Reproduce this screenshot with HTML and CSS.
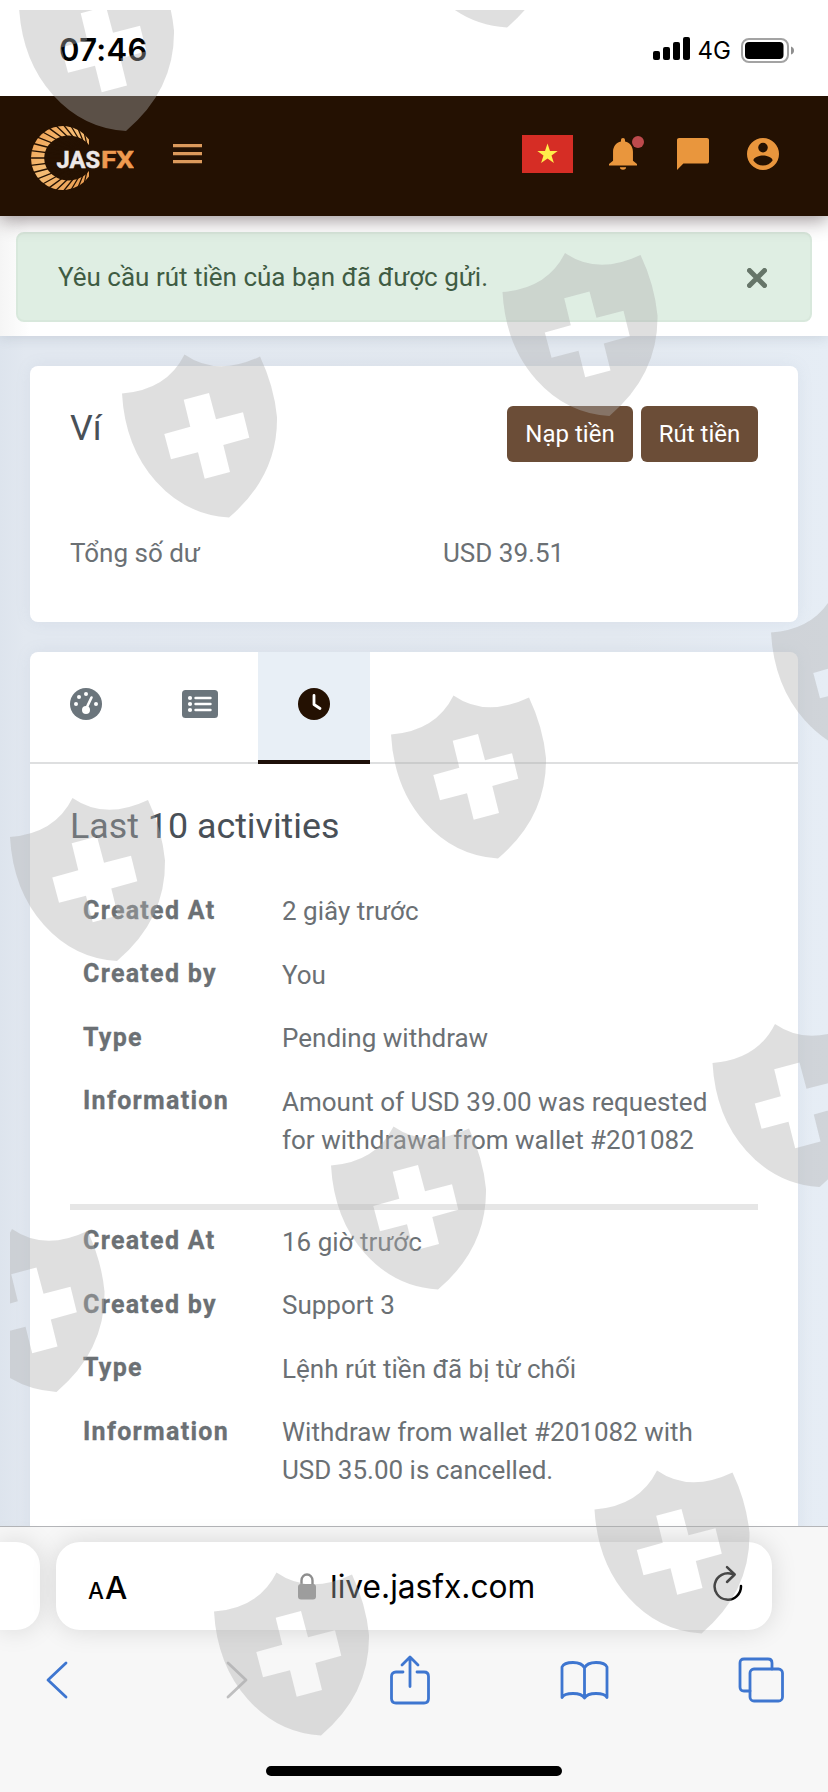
FILE: index.html
```html
<!DOCTYPE html>
<html lang="vi">
<head>
<meta charset="utf-8">
<title>JASFX</title>
<link rel="stylesheet" href="styles.css">
</head>
<body>
<div class="screen">
  <div class="status">
    <span class="time">07:46</span>
    <svg class="signal" width="37" height="24" viewBox="0 0 37 24"><rect x="0" y="14" width="7" height="9" rx="2"/><rect x="10" y="10" width="7" height="13" rx="2"/><rect x="20" y="5" width="7" height="18" rx="2"/><rect x="30" y="0" width="7" height="23" rx="2"/></svg>
    <span class="net">4G</span>
    <svg class="battery" width="53" height="25" viewBox="0 0 53 25"><rect x="1" y="1" width="46" height="23" rx="7" fill="#fff" stroke="#a3a3a3" stroke-width="2"/><rect x="4" y="4" width="38.500" height="17" rx="4"/><path d="M50 8.500q3 1 3 4t-3 4z" fill="#8f8f8f"/></svg>
  </div>

  <header class="header">
    <svg class="logo" width="104" height="66" viewBox="30 125 104 66">
      <defs><linearGradient id="gold" x1="0" y1="0" x2="1" y2="1"><stop offset="0" stop-color="#ee9b4c"/><stop offset=".45" stop-color="#f5bd75"/><stop offset="1" stop-color="#e9974a"/></linearGradient></defs>
      <path d="M89 139.400A32 32 0 1 0 89 176.600V171A24.700 22.500 0 1 1 89 145z" fill="url(#gold)"/>
      <path d="M90 158L84.200 183.300M90 158L78 187.400M90 158L71 190M90 158L63.600 191M90 158L56.100 190.300M90 158L49 187.900M90 158L42.700 184M90 158L37.400 178.800M90 158L33.300 172.500M90 158L30.800 165.400M90 158H30M90 158L30.800 150.600M90 158L33.300 143.500M90 158L37.400 137.200M90 158L42.700 132M90 158L49 128.100M90 158L56.100 125.700M90 158L63.600 125M90 158L71 126M90 158L78 128.600M90 158L84.200 132.700" stroke="#241102" stroke-width="1.300"/>
      <text x="56.500" y="167.500" class="logo-a" textLength="43.500" lengthAdjust="spacingAndGlyphs">JAS</text>
      <text x="101" y="167.500" class="logo-b" textLength="33" lengthAdjust="spacingAndGlyphs">FX</text>
    </svg>
    <svg class="menu" width="29" height="20" viewBox="0 0 29 20"><path d="M0 1.700h29M0 9.700h29M0 17.700h29" stroke="#dc9a5c" stroke-width="3.200"/></svg>
    <svg class="flag" width="51" height="38" viewBox="0 0 51 38"><path fill="#d62d25" d="M0 0h51v38H0z"/><path fill="#ffee4a" d="M25.500 8.500l2.500 7.400h7.700l-6.200 4.600 2.400 7.500-6.400-4.600-6.400 4.600 2.400-7.500-6.200-4.600H23z"/></svg>
    <span class="bell"><svg width="28" height="32" viewBox="3 2 18 21" preserveAspectRatio="none"><path fill="#e9963d" d="M21 19v1H3v-1l2.600-2V11c0-3.300 2-6 5.100-6.700V3.300a1.300 1.300 0 0 1 2.600 0v1c3.100.7 5.100 3.400 5.100 6.700v6zM14 21.200a2 1.600 0 0 1-4 0z"/></svg><i class="dot"></i></span>
    <svg class="chat" width="32" height="32" viewBox="2 2 20 20"><path fill="#e9963d" d="M20.700 2H3.300C2.600 2 2 2.600 2 3.300V22l4-4h14.700c.7 0 1.300-.6 1.300-1.300V3.300C22 2.600 21.400 2 20.700 2z"/></svg>
    <svg class="user" width="32" height="32" viewBox="2 2 20 20"><path fill="#e9963d" d="M12 19.200c-2.500 0-4.710-1.280-6-3.200.03-2 4-3.100 6-3.100s5.970 1.100 6 3.100c-1.290 1.920-3.500 3.200-6 3.200M12 5a3 3 0 0 1 0 6 3 3 0 0 1 0-6m0-3a10 10 0 0 0 0 20 10 10 0 0 0 0-20z"/></svg>
  </header>

  <div class="notice">
    <div class="alert">
      <span>Yêu cầu rút tiền của bạn đã được gửi.</span>
      <svg width="20" height="20" viewBox="0 0 20 20"><path d="M2.500 2.500l15 15M17.500 2.500l-15 15" stroke="#667569" stroke-width="5" stroke-linecap="round"/></svg>
    </div>
  </div>

  <main class="page">
    <section class="card wallet">
      <div class="wallet-top">
        <h2>Ví</h2>
        <div class="buttons"><a class="btn deposit">Nạp tiền</a><a class="btn withdraw">Rút tiền</a></div>
      </div>
      <div class="balance"><span>Tổng số dư</span><span>USD 39.51</span></div>
    </section>

    <section class="card activity">
      <nav class="tabs">
        <a class="tab"><svg width="32" height="32" viewBox="0 0 32 32"><circle cx="16" cy="16" r="16" fill="#6b757c"/><g fill="#fff"><circle cx="16" cy="6" r="2"/><circle cx="9" cy="9" r="2"/><circle cx="6" cy="16" r="2"/><circle cx="26" cy="16" r="2"/><circle cx="16" cy="22" r="4"/></g><path d="M16 21l5.500-11.500" stroke="#fff" stroke-width="2.600" stroke-linecap="round"/></svg></a>
        <a class="tab"><svg width="36" height="28" viewBox="0 0 36 28"><rect width="36" height="28" rx="3.500" fill="#6b757c"/><g fill="#fff"><circle cx="8" cy="8" r="2.100"/><circle cx="8" cy="14" r="2.100"/><circle cx="8" cy="20" r="2.100"/></g><path d="M13.500 8h15M13.500 14h15M13.500 20h15" stroke="#fff" stroke-width="2.400" stroke-linecap="round"/></svg></a>
        <a class="tab active"><svg width="32" height="32" viewBox="0 0 32 32"><circle cx="16" cy="16" r="16" fill="#241102"/><path d="M16 7.500v9l6 4" fill="none" stroke="#fff" stroke-width="2.800" stroke-linecap="round" stroke-linejoin="round"/></svg></a>
      </nav>
      <div class="body">
        <h3>Last 10 activities</h3>
        <dl>
          <dt>Created At</dt><dd>2 giây trước</dd>
          <dt>Created by</dt><dd>You</dd>
          <dt>Type</dt><dd>Pending withdraw</dd>
          <dt>Information</dt><dd>Amount of USD 39.00 was requested<br>for withdrawal from wallet #201082</dd>
        </dl>
        <hr>
        <dl>
          <dt>Created At</dt><dd>16 giờ trước</dd>
          <dt>Created by</dt><dd>Support 3</dd>
          <dt>Type</dt><dd>Lệnh rút tiền đã bị từ chối</dd>
          <dt>Information</dt><dd>Withdraw from wallet #201082 with<br>USD 35.00 is cancelled.</dd>
        </dl>
      </div>
    </section>
  </main>

  <footer class="browser">
    <div class="addresses">
      <div class="prev-tab"></div>
      <div class="address">
        <span class="aa"><small>A</small>A</span>
        <svg class="lock" width="18" height="27" viewBox="0 0 18 27"><path d="M3.500 12V7.500a5.500 6 0 0 1 11 0V12" fill="none" stroke="#8e8e8e" stroke-width="2.400"/><rect y="11" width="18" height="15.500" rx="3" fill="#929292"/></svg>
        <span class="url">live.jasfx.com</span>
        <svg class="reload" width="30" height="38" viewBox="0 0 30 38"><path d="M19.500 9.100A13.200 13.200 0 1 0 28 21" fill="none" stroke="#000" stroke-width="2.500" stroke-linecap="round"/><path d="M14 2.200l7.700 7.300-7.700 7.500" fill="none" stroke="#000" stroke-width="2.500" stroke-linecap="round" stroke-linejoin="round"/></svg>
      </div>
    </div>
    <div class="tools">
      <svg width="22" height="38" viewBox="0 0 22 38"><path d="M20 2L2 19l18 17"/></svg>
      <svg class="off" width="22" height="38" viewBox="0 0 22 38"><path d="M2 2l18 17L2 36"/></svg>
      <svg class="share" width="40" height="50" viewBox="0 0 40 50"><path d="M13 17H6q-4.500 0-4.500 4.500v22Q1.500 48 6 48h28q4.500 0 4.500-4.500v-22Q38.500 17 34 17h-7M20 31.500V2.500M12 10l8-8 8 8"/></svg>
      <svg class="book" width="49" height="40" viewBox="0 0 49 40"><path d="M24.500 38Q22 33.500 13 33.500T2 37.500V7Q4 2.500 13 2.500T24.500 8Q27 2.500 36 2.500T47 7v30.500q-2-4-11-4T24.500 38V8"/></svg>
      <svg class="windows" width="46" height="46" viewBox="0 0 46 46"><path d="M12 34H6q-4 0-4-4V6q0-4 4-4h24q4 0 4 4v6"/><rect x="12" y="12" width="32.500" height="32" rx="4"/></svg>
    </div>
    <div class="home"></div>
  </footer>

  <svg class="marks" width="828" height="1792" viewBox="0 0 828 1792">
    <defs>
      <clipPath id="edge"><path d="M10 10h818v1782H10z"/></clipPath>
      <path id="shield" fill-rule="evenodd" d="M0 39.500Q45 36 62.500.5Q95 23 138 2.500Q152 32 155 63Q156 122 107 163.500Q64 161 34 127.500Q3 93 0 39.500ZM61.700 45.700L87 39L94 65.300L121 58.300L127.300 83.700L101.300 91L108 118L82.700 124.700L76 98.300L49 105.300L42.300 80L68.300 72.700Z"/>
    </defs>
    <g clip-path="url(#edge)" fill="#afafaf" fill-opacity=".4">
      <use href="#shield" x="19" y="-32.500"/><use href="#shield" x="400" y="-136"/>
      <use href="#shield" x="122" y="354"/><use href="#shield" x="502.500" y="252.500"/>
      <use href="#shield" x="771" y="593"/><use href="#shield" x="391" y="695"/>
      <use href="#shield" x="10" y="797.500"/><use href="#shield" x="712.500" y="1023.500"/>
      <use href="#shield" x="331" y="1126"/><use href="#shield" x="-50.500" y="1228.500"/>
      <use href="#shield" x="594.500" y="1470"/><use href="#shield" x="214" y="1572"/>
    </g>
  </svg>
</div>
</body>
</html>
```
FILE: styles.css
```css
* { box-sizing: border-box; }
body { margin: 0; font-family: Roboto, sans-serif; color: #6b7074; font-size: 26px; }
svg { display: block; flex: none; }
h2, h3, dl, dd, dt { margin: 0; font-weight: 400; }
.screen { position: relative; width: 828px; height: 1792px; overflow: hidden; display: flex; flex-direction: column; background: #fff; }

.status { height: 96px; flex: none; display: flex; align-items: center; padding: 4px 34px 0 59px; color: #000; background: #fff; position: relative; z-index: 2; font-family: Inter, sans-serif; }
.time { font-size: 31px; font-weight: 600; letter-spacing: .3px; margin: -2px auto 0 0; }
.net { font-size: 24px; margin: 0 10px 0 8px; }
.signal { margin-top: -2px; }

.header { height: 120px; flex: none; display: flex; align-items: center; padding: 0 49px 4px 30px; background: #241102; position: relative; z-index: 1; box-shadow: 0 4px 18px rgba(36, 17, 22, .45); }
.logo { margin-top: 8px; }
.logo-a, .logo-b { font: 700 24.500px Roboto, sans-serif; fill: #ede8e8; stroke: #ede8e8; stroke-width: .5px; }
.logo-b { fill: #ee9a50; stroke: #ee9a50; }
.menu { margin-left: 39px; }
.flag { margin-left: auto; }
.bell { margin-left: 36px; position: relative; }
.dot { position: absolute; left: 23px; top: -2px; width: 12px; height: 12px; border-radius: 50%; background: #bd4a4c; }
.chat { margin-left: 40px; }
.user { margin-left: 38px; }

.notice { height: 120px; flex: none; padding: 16px 16px 0; background: linear-gradient(90deg, #f5f5f5, #fff 30px); position: relative; box-shadow: 0 2px 12px rgba(50, 70, 90, .14); }
.alert { height: 90px; display: flex; align-items: center; justify-content: space-between; padding: 0 43px 0 40px; border: 2px solid #d8e8dc; border-radius: 8px; background: #dfeee3; color: #3f5c43; }
.alert svg { margin-top: 1px; }

.page { flex: 1; min-height: 0; padding: 30px 30px 0; overflow: hidden; display: flex; flex-direction: column; gap: 30px; background: linear-gradient(90deg, #dde4ed, #e2e8f0 25px, #e3e9f0 75%, #e6edf5); }
.card { flex: none; border-radius: 8px; background: #fff; box-shadow: 0 0 16px rgba(120, 140, 165, .1); }
.wallet { height: 256px; padding: 40px 40px 0; }
.wallet-top { display: flex; justify-content: space-between; height: 56px; }
h2, h3 { font-size: 35.800px; line-height: 42px; color: #495057; }
h2 { padding-top: 1px; }
.buttons { display: flex; gap: 8px; }
.btn { height: 56px; display: flex; align-items: center; justify-content: center; padding-bottom: 1px; border-radius: 6px; background: #6b4d37; color: #fff; font-size: 24px; }
.deposit { width: 126px; }
.withdraw { width: 117px; }
.balance { display: grid; grid-template-columns: 373px 1fr; margin-top: 72px; line-height: 38px; }

.activity { height: 1000px; }
.tabs { height: 112px; display: flex; border-bottom: 2px solid #dedfe0; }
.tab { width: 114px; height: 104px; display: flex; align-items: center; justify-content: center; padding-right: 2px; }
.tab.active { width: 112px; height: 112px; padding: 0 0 4px; background: #e8eff6; border-bottom: 4px solid #1d1009; }
.body { padding: 41px 40px 0; }
h3 { margin-bottom: 32.500px; }
dl { display: grid; grid-template-columns: 199px 1fr; padding-left: 13px; }
dt, dd { padding: 12.750px 0; line-height: 38px; }
dt { padding-top: 12px; font-size: 25px; font-weight: 700; letter-spacing: 1.300px; -webkit-text-stroke: .3px currentColor; }
hr { height: 6px; margin: 32.500px 0 0; border: 0; background: #e6e6e6; }

.browser { height: 266px; flex: none; position: relative; border-top: 1px solid #b4b5b8; background: #f7f7f7; }
.addresses { display: flex; gap: 16px; padding-top: 15px; }
.prev-tab { width: 40px; height: 88px; border-radius: 0 24px 24px 0; background: #fff; box-shadow: 0 0 26px rgba(0, 0, 0, .13); }
.address { width: 716px; height: 88px; display: flex; align-items: center; padding: 0 29px 0 32px; border-radius: 24px; background: #fff; box-shadow: 0 0 26px rgba(0, 0, 0, .13); font-family: Inter, sans-serif; color: #000; }
.aa { width: 210px; font-size: 31.500px; font-weight: 500; letter-spacing: -1px; padding-top: 3px; }
.aa small { font-size: 22.500px; margin-right: 2px; }
.url { margin-left: 14px; font-size: 31.700px; }
.reload { margin-left: auto; margin-top: -5px; }
.tools { display: flex; align-items: center; padding-left: 46px; height: 100px; }
.tools svg { fill: none; stroke: #3e76d0; stroke-width: 2.800; stroke-linecap: round; stroke-linejoin: round; }
.tools .off { stroke: #bfbfc0; margin-left: 158px; }
.tools .share { margin-left: 142px; }
.tools .book { margin-left: 130px; }
.tools .windows { margin-left: 129px; }
.home { width: 296px; height: 10px; margin: 36px 0 0 266px; border-radius: 5px; background: #000; }

.marks { position: absolute; left: 0; top: 0; z-index: 3; }
```
